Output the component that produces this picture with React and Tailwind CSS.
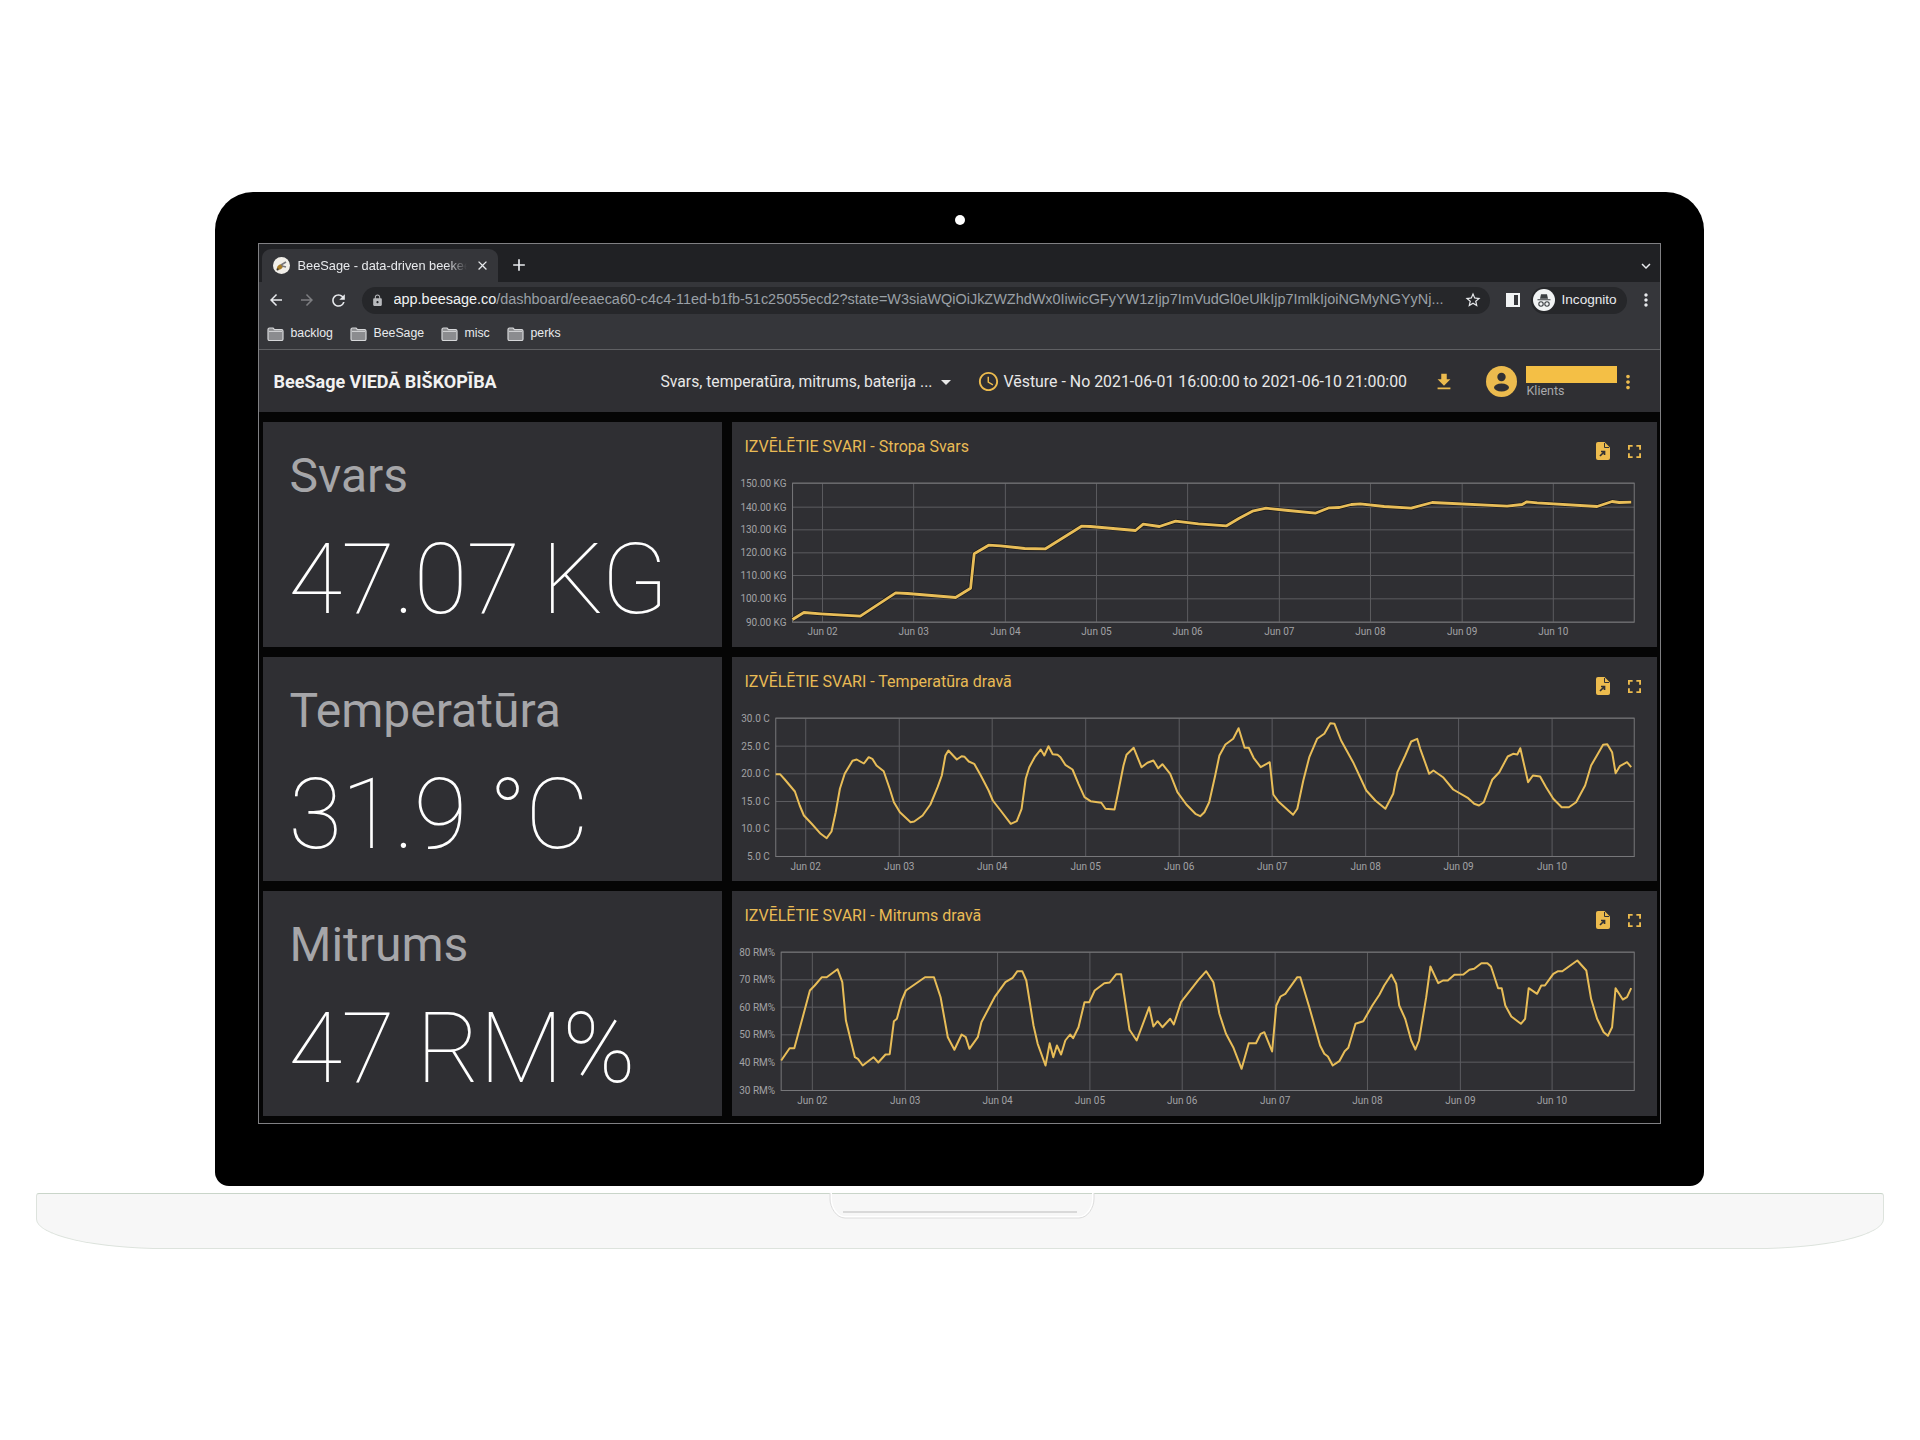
import React from "react";
import {
  MdArrowBack, MdArrowForward, MdRefresh, MdLock, MdStarBorder, MdMoreVert, MdAccessTime,
  MdFileDownload, MdArrowDropDown, MdClose, MdAdd, MdKeyboardArrowDown,
} from "react-icons/md";

const SX = 1568 / 940;
const YELLOW = "#ecbb4e";
const LINE = "#e8bd58";

const weight = [[103,597],[122,576],[150,580],[216,587],[275,517],[295,519],[375,531],[400,503],[406,400],[430,374],[450,376],[490,384],[525,385],[585,317],[600,318],[675,330],[688,311],[715,318],[742,302],[780,310],[827,316],[848,293],[870,272],[893,263],[930,270],[975,278],[998,262],[1015,261],[1035,252],[1050,250],[1090,258],[1135,263],[1170,246],[1295,257],[1320,252],[1328,244],[1345,247],[1445,258],[1470,243],[1482,246],[1502,245]];
const temp = [[75,356],[82,356],[90,372],[107,408],[115,450],[122,480],[135,505],[150,535],[160,548],[168,528],[175,470],[182,400],[190,355],[203,316],[210,312],[222,324],[230,305],[236,310],[243,330],[255,347],[265,400],[272,440],[282,470],[300,500],[306,498],[320,480],[333,447],[345,395],[352,360],[358,300],[363,285],[377,312],[385,302],[390,304],[397,318],[406,325],[417,360],[430,405],[437,435],[450,465],[467,505],[477,497],[485,460],[492,370],[498,335],[507,305],[517,282],[523,300],[530,272],[537,296],[545,298],[550,305],[558,328],[570,342],[580,385],[590,425],[600,437],[618,442],[625,460],[640,462],[645,420],[655,330],[660,298],[672,277],[685,335],[695,322],[705,315],[713,338],[720,326],[733,355],[745,410],[760,447],[775,475],[783,482],[790,470],[798,440],[808,360],[815,300],[825,267],[838,250],[847,218],[857,277],[864,277],[872,307],[884,335],[899,320],[905,417],[913,437],[925,457],[938,478],[945,460],[955,375],[965,305],[978,250],[990,235],[1000,203],[1007,205],[1018,255],[1038,320],[1060,405],[1075,435],[1092,460],[1105,415],[1112,350],[1125,300],[1135,258],[1145,250],[1150,280],[1165,355],[1172,345],[1188,365],[1205,402],[1230,428],[1240,445],[1248,450],[1256,440],[1270,373],[1282,350],[1296,303],[1305,295],[1312,297],[1317,278],[1330,380],[1338,360],[1350,363],[1360,395],[1372,430],[1386,455],[1398,455],[1410,440],[1425,390],[1435,330],[1455,268],[1462,266],[1470,290],[1476,353],[1483,332],[1495,320],[1502,335]];
const hum = [[84,510],[98,473],[106,473],[120,380],[132,300],[140,285],[152,260],[160,260],[178,236],[186,275],[192,390],[207,500],[212,505],[220,525],[238,500],[246,516],[258,492],[265,491],[272,392],[277,385],[285,330],[292,300],[324,260],[339,260],[350,320],[362,440],[373,478],[385,432],[392,440],[398,475],[412,440],[418,395],[440,320],[458,275],[470,262],[478,242],[486,242],[493,270],[505,405],[512,460],[525,525],[532,458],[538,500],[544,465],[551,492],[558,450],[566,432],[571,443],[580,410],[590,335],[598,335],[607,300],[623,278],[632,276],[643,251],[651,251],[665,418],[677,450],[698,350],[705,408],[712,392],[720,410],[733,385],[739,402],[751,335],[780,268],[793,242],[805,275],[815,370],[826,430],[838,470],[852,535],[864,458],[876,458],[884,430],[890,425],[903,483],[910,345],[917,318],[925,310],[945,260],[950,260],[965,350],[983,465],[990,490],[996,498],[1004,525],[1015,512],[1024,482],[1030,472],[1042,400],[1055,392],[1070,345],[1082,313],[1090,285],[1102,252],[1110,280],[1115,345],[1125,385],[1135,450],[1142,477],[1148,450],[1160,320],[1167,228],[1180,278],[1188,270],[1196,270],[1207,253],[1222,252],[1232,238],[1240,235],[1252,218],[1262,218],[1268,228],[1280,293],[1286,293],[1292,345],[1302,378],[1318,400],[1325,385],[1331,293],[1345,310],[1352,285],[1358,285],[1372,250],[1380,242],[1387,242],[1412,210],[1427,240],[1435,325],[1445,385],[1456,425],[1463,436],[1470,410],[1476,293],[1488,327],[1495,320],[1502,293]];

const days = ["Jun 02","Jun 03","Jun 04","Jun 05","Jun 06","Jun 07","Jun 08","Jun 09","Jun 10"];

const charts = [
  { title: "IZVĒLĒTIE SVARI - Stropa Svars", oy: 1.5, h: 225, left: 103, top: 188, bottom: 605, labY: 635, grid: [188,260,328,397,465,535,605], gridX: [153,305,458,610,762,915,1067,1220,1372], labels: ["150.00 KG","140.00 KG","130.00 KG","120.00 KG","110.00 KG","100.00 KG","90.00 KG"], data: weight, sw: 2.8, halo: true },
  { title: "IZVĒLĒTIE SVARI - Temperatūra dravā", oy: 1.5, h: 224, left: 75, top: 188, bottom: 603, labY: 635, grid: [188,272,355,438,520,603], gridX: [125,281,436,592,748,903,1059,1214,1370], labels: ["30.0 C","25.0 C","20.0 C","15.0 C","10.0 C","5.0 C"], data: temp, sw: 2 },
  { title: "IZVĒLĒTIE SVARI - Mitrums dravā", oy: 0.5, h: 225, left: 84, top: 185, bottom: 600, labY: 630, grid: [185,268,350,433,515,600], gridX: [136,291,445,599,753,908,1062,1217,1370], labels: ["80 RM%","70 RM%","60 RM%","50 RM%","40 RM%","30 RM%"], data: hum, sw: 2 },
];

const stats = [
  { label: "Svars", value: "47.07 KG", h: "h-[225px]" },
  { label: "Temperatūra", value: "31.9 °C", h: "h-[224px]" },
  { label: "Mitrums", value: "47 RM%", h: "h-[225px]" },
];

function FileIcon() {
  return (
    <svg width="14" height="18" viewBox="0 0 14 18">
      <path d="M2 0h6.5L14 5.5V16a2 2 0 0 1-2 2H2a2 2 0 0 1-2-2V2a2 2 0 0 1 2-2z" fill={YELLOW} />
      <path d="M8.5 1v4.5H13" fill="none" stroke="#303034" strokeWidth="1" />
      <path d="M4 14l4-4M5 9.5h3.5V13" fill="none" stroke="#303034" strokeWidth="1.7" />
    </svg>
  );
}

function ExpandIcon() {
  return (
    <svg width="13" height="13" viewBox="0 0 14 14" fill="none" stroke={YELLOW} strokeWidth="2">
      <path d="M1 5V1h4M9 1h4v4M13 9v4H9M5 13H1V9" />
    </svg>
  );
}

function Folder() {
  return (
    <svg width="17" height="14" viewBox="0 0 17 14" className="shrink-0">
      <path d="M1 2.5a1.5 1.5 0 0 1 1.5-1.5h3.6l1.4 1.6h7A1.5 1.5 0 0 1 16 4v8a1.5 1.5 0 0 1-1.5 1.5h-12A1.5 1.5 0 0 1 1 12z" fill="#8b8c8f" stroke="#d6d7d9" strokeWidth="1.2" />
      <path d="M2 4.4h13" stroke="#d6d7d9" strokeWidth="1" />
    </svg>
  );
}

function Bookmark({ name, className }) {
  return (
    <div className={`flex items-center gap-[7px] ${className}`}>
      <Folder />
      <span className="text-[12.3px] text-[#e8eaed] font-['Liberation_Sans',sans-serif]">{name}</span>
    </div>
  );
}

function Favicon() {
  return (
    <svg width="17" height="17" viewBox="0 0 17 17" className="shrink-0">
      <circle cx="8.5" cy="8.5" r="8.5" fill="#f1efe9" />
      <ellipse cx="7" cy="10" rx="3.2" ry="2.2" fill="#a57a25" transform="rotate(-40 7 10)" />
      <path d="M8 8l5-3M9 9l4 1" stroke="#77767a" strokeWidth="1.6" />
      <circle cx="4.6" cy="12.4" r="1.1" fill="#3b3323" />
    </svg>
  );
}

function IncognitoAvatar() {
  return (
    <svg width="22" height="22" viewBox="0 0 22 22" className="shrink-0">
      <circle cx="11" cy="11" r="11" fill="#f1f3f4" />
      <path d="M4.5 10.2h13v1h-13zM7 9.8l1-4.6h6l1 4.6z" fill="#3c4043" />
      <circle cx="8" cy="15" r="2.2" fill="none" stroke="#3c4043" strokeWidth="1.1" />
      <circle cx="14" cy="15" r="2.2" fill="none" stroke="#3c4043" strokeWidth="1.1" />
    </svg>
  );
}

function UserIcon() {
  return (
    <svg width="31" height="31" viewBox="0 0 31 31" className="shrink-0">
      <circle cx="15.5" cy="15.5" r="15.5" fill={YELLOW} />
      <circle cx="15.5" cy="11" r="4.2" fill="#303034" />
      <ellipse cx="15.5" cy="21.5" rx="7.5" ry="4" fill="#303034" />
    </svg>
  );
}

function Chart({ c }) {
  const hdr = 50;
  const vbH = c.h - hdr;
  const points = c.data.map(([x, y]) => `${(x / SX).toFixed(1)},${(y / 3).toFixed(1)}`).join(" ");
  const lx = c.left / SX;
  const rx = 1507 / SX;
  const ty = c.top / 3;
  const by = c.bottom / 3;
  return (
    <div className="bg-[#2f2f33] flex flex-col w-[925px] font-['Roboto',sans-serif]" style={{ height: c.h }}>
      <div className="h-[50px] shrink-0 flex justify-between pl-[13px] pr-[16px]">
        <span className="text-[16px] leading-[50px] text-[#e9bb55]">{c.title}</span>
        <div className="flex items-center gap-[18px] pt-[8px]">
          <FileIcon />
          <ExpandIcon />
        </div>
      </div>
      <svg width="925" height={vbH} viewBox={`1.2 ${c.oy + hdr} 925 ${vbH}`} className="block">
        {c.grid.map((g) => (
          <line key={g} x1={lx} x2={rx} y1={g / 3} y2={g / 3} stroke="#5c5c60" strokeWidth="1" />
        ))}
        {c.gridX.map((g) => (
          <line key={g} x1={g / SX} x2={g / SX} y1={ty} y2={by} stroke="#5c5c60" strokeWidth="1" />
        ))}
        <rect x={lx} y={ty} width={rx - lx} height={by - ty} fill="none" stroke="#77777a" strokeWidth="1" />
        {c.labels.map((t, i) => (
          <text key={t} x={lx - 6} y={c.grid[i] / 3 + 3.5} textAnchor="end" fontSize="10" fill="#a2a2a5" fontFamily="Roboto">{t}</text>
        ))}
        {days.map((d, i) => (
          <text key={d} x={c.gridX[i] / SX} y={c.labY / 3 + 3} textAnchor="middle" fontSize="10" fill="#a2a2a5" fontFamily="Roboto">{d}</text>
        ))}
        {c.halo && <polyline points={points} fill="none" stroke="#17171a" strokeWidth={c.sw + 1.4} strokeLinejoin="round" />}
        <polyline points={points} fill="none" stroke={LINE} strokeWidth={c.sw} strokeLinejoin="round" />
      </svg>
    </div>
  );
}

function Stat({ s }) {
  return (
    <div className={`${s.h} w-[459px] bg-[#2f2f33] pl-[27px] font-['Roboto',sans-serif]`}>
      <div className="text-[48px] leading-[56px] pt-[26px] h-[103px] text-[#a6a6a9]">{s.label}</div>
      <div className="-ml-[1px] text-[98px] leading-[110px] font-thin text-white tracking-[-1px]">{s.value}</div>
    </div>
  );
}

export default function App() {
  return (
    <div className="w-[1920px] h-[1440px] bg-white flex flex-col items-center pt-[192px]">
      {/* lid */}
      <div className="mr-[2px] w-[1489px] h-[994px] bg-black rounded-t-[38px] rounded-b-[14px] flex flex-col items-center">
        <div className="h-[51px] w-full flex items-center justify-center pt-[5px]">
          <div className="ml-[2px] w-[10px] h-[10px] rounded-full bg-white" />
        </div>
        <div className="w-[1403px] h-[881px] border border-[#808083] bg-black flex flex-col">
          {/* tab strip */}
          <div className="h-[38px] shrink-0 bg-[#202124] flex items-end pl-[3px]">
            <div className="w-[236px] h-[33px] bg-[#35363a] rounded-t-[9px] flex items-center pl-[11px] gap-[8px]">
              <Favicon />
              <span className="w-[169px] whitespace-nowrap text-[12.8px] text-[#e8eaed] font-['Liberation_Sans',sans-serif] [mask-image:linear-gradient(to_right,black_88%,transparent)]">BeeSage - data-driven beekee</span>
              <MdClose className="text-[#e8eaed] shrink-0" size={15} />
            </div>
            <MdAdd className="text-[#e8eaed] ml-[11px] mb-[7px]" size={20} />
            <MdKeyboardArrowDown className="text-[#e8eaed] ml-auto mr-[5px] mb-[7px]" size={18} />
          </div>
          {/* toolbar */}
          <div className="h-[36px] shrink-0 bg-[#35363a] flex items-center pl-[8px]">
            <MdArrowBack className="text-[#e8eaed] shrink-0" size={18} />
            <MdArrowForward className="text-[#7d7e81] ml-[13px] shrink-0" size={18} />
            <MdRefresh className="text-[#e8eaed] ml-[13px] shrink-0" size={19} />
            <div className="ml-[14px] w-[1128px] h-[27px] rounded-full bg-[#26272a] flex items-center pl-[9px] shrink-0">
              <MdLock className="text-[#b8babd] shrink-0" size={13} />
              <span className="ml-[10px] w-[1053px] overflow-hidden whitespace-nowrap text-[14.45px] text-[#9aa0a6] font-['Liberation_Sans',sans-serif]">
                <span className="text-[#f1f3f4]">app.beesage.co</span>/dashboard/eeaeca60-c4c4-11ed-b1fb-51c25055ecd2?state=W3siaWQiOiJkZWZhdWx0IiwicGFyYW1zIjp7ImVudGl0eUlkIjp7ImlkIjoiNGMyNGYyNj...
              </span>
              <MdStarBorder className="text-[#e8eaed] ml-[17px] shrink-0" size={18} />
            </div>
            <svg width="14" height="14" viewBox="0 0 14 14" className="ml-[16px] shrink-0">
              <rect x="1" y="1" width="12" height="12" fill="#35363a" stroke="#f1f3f4" strokeWidth="2" />
              <rect x="1" y="1" width="7" height="12" fill="#f1f3f4" />
            </svg>
            <div className="ml-[11px] w-[96px] h-[27px] rounded-full bg-[#26272a] flex items-center pl-[2px] gap-[7px] shrink-0">
              <IncognitoAvatar />
              <span className="text-[13.6px] text-[#e8eaed] font-['Liberation_Sans',sans-serif]">Incognito</span>
            </div>
            <MdMoreVert className="text-[#e8eaed] ml-[9px] shrink-0" size={20} />
          </div>
          {/* bookmarks */}
          <div className="h-[31px] shrink-0 bg-[#35363a] flex items-center pl-[8px]">
            <Bookmark name="backlog" className="w-[83px]" />
            <Bookmark name="BeeSage" className="w-[91px]" />
            <Bookmark name="misc" className="w-[66px]" />
            <Bookmark name="perks" />
          </div>
          {/* app bar */}
          <div className="h-[63px] shrink-0 bg-[#2f2f33] border-t border-[#5f6063] flex items-center pl-[15px] pt-[1px] font-['Roboto',sans-serif]">
            <span className="w-[387px] text-[18px] font-bold text-[#f1f1f1] whitespace-nowrap">BeeSage VIEDĀ BIŠKOPĪBA</span>
            <span className="w-[272px] text-[15.7px] text-[#e8e8e8] whitespace-nowrap">Svars, temperatūra, mitrums, baterija ...</span>
            <MdArrowDropDown className="text-[#e8e8e8] ml-[1px] shrink-0" size={24} />
            <MdAccessTime className="ml-[19px] shrink-0" color={YELLOW} size={23} />
            <span className="ml-[4px] w-[403px] text-[15.9px] text-[#e8e8e8] whitespace-nowrap">Vēsture - No 2021-06-01 16:00:00 to 2021-06-10 21:00:00</span>
            <MdFileDownload className="ml-[26px] shrink-0" color={YELLOW} size={22} />
            <div className="ml-[31px]"><UserIcon /></div>
            <div className="ml-[9px] flex flex-col w-[91px]">
              <div className="h-[17px] w-[91px] bg-[#f4bf45]" />
              <span className="text-[12.5px] leading-[14px] mt-[1px] pl-[1px] text-[#a9a9ac]">Klients</span>
            </div>
            <MdMoreVert className="shrink-0" color={YELLOW} size={22} />
          </div>
          {/* dashboard */}
          <div className="flex-1 bg-[#050505] flex pt-[10px] pl-[4px] gap-[10px]">
            <div className="flex flex-col gap-[10px]">
              {stats.map((s) => <Stat key={s.label} s={s} />)}
            </div>
            <div className="flex flex-col gap-[10px]">
              {charts.map((c) => <Chart key={c.title} c={c} />)}
            </div>
          </div>
        </div>
      </div>
      {/* base */}
      <div className="relative mt-[7px] w-[1848px] h-[56px] bg-[#f7f7f7] border border-[#dde3dd] border-t-[#c9d5c9] rounded-t-[3px] rounded-b-[130px_30px]">
        <svg width="266" height="26" viewBox="0 0 266 26" className="absolute left-[792px] -top-px" fill="none">
          <path d="M2 0v6c0 8 6 18 14 18h234c8 0 14-10 14-18V0" stroke="#ffffff" strokeWidth="2" />
          <path d="M1 0v6c0 8 6 19 15 19h234c9 0 15-11 15-19V0" stroke="#dcdcdc" strokeWidth="1" />
          <path d="M14 19h234" stroke="#cfcfcf" strokeWidth="1.5" />
        </svg>
      </div>
    </div>
  );
}
